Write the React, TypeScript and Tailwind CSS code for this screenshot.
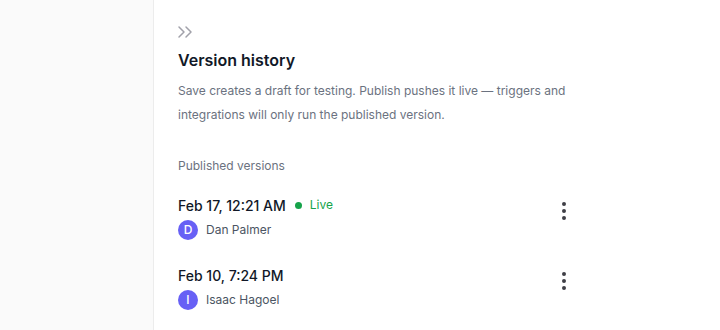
import React from 'react';
import { ChevronsRight, EllipsisVertical } from 'lucide-react';

interface Version {
  date: string;
  author: string;
  initial: string;
  live?: boolean;
}

const versions: Version[] = [
  { date: 'Feb 17, 12:21 AM', author: 'Dan Palmer', initial: 'D', live: true },
  { date: 'Feb 10, 7:24 PM', author: 'Isaac Hagoel', initial: 'I' },
];

export default function App() {
  return (
    <div className="flex w-[720px] h-[330px] bg-white overflow-hidden" style={{ fontFamily: 'Inter, "Noto Sans", sans-serif' }}>
      {/* Left rail */}
      <div className="w-[154px] shrink-0 bg-[#fafafa] border-r border-[#ececec]" />

      {/* Version panel */}
      <div className="flex-1 flex flex-col pl-6 pr-[144px] pt-5">
        <ChevronsRight size={24} strokeWidth={1.5} className="text-[#a1a1aa] -ml-[5px]" />
        <h2 className="mt-1 text-[16px] leading-6 font-semibold text-[#111827]">Version history</h2>
        <p className="mt-[7px] text-[12px] leading-6 text-[#6b7280]">
          Save creates a draft for testing. Publish pushes it live — triggers and integrations will only run the published version.
        </p>

        <div className="mt-[27px] text-[12px] leading-6 text-[#6b7280]">Published versions</div>

        <div className="mt-[17px] flex flex-col gap-[25px]">
          {versions.map((v) => (
            <div key={v.date} className="flex items-start justify-between">
              <div className="flex flex-col gap-[5px]">
                <div className="flex items-center h-5">
                  <span className="text-[14px] font-medium text-[#111827]">{v.date}</span>
                  {v.live && (
                    <span className="ml-[9px] flex items-center gap-2 text-[12px] text-[#16a34a]">
                      <span className="w-[7px] h-[7px] rounded-full bg-[#16a34a]" />
                      Live
                    </span>
                  )}
                </div>
                <div className="flex items-center gap-2">
                  <div className="w-5 h-5 rounded-full bg-[#6760f5] flex items-center justify-center text-white text-[12px] font-medium">
                    {v.initial}
                  </div>
                  <span className="text-[12px] text-[#4b5563]">{v.author}</span>
                </div>
              </div>
              <button className="mt-1 w-6 h-6 flex items-center justify-center text-[#3f3f46]">
                <EllipsisVertical size={24} strokeWidth={2} />
              </button>
            </div>
          ))}
        </div>
      </div>
    </div>
  );
}
